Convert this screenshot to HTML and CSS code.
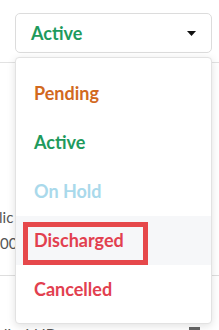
FILE: index.html
```html
<!DOCTYPE html>
<html lang="en">
<head>
    <meta charset="UTF-8">
    <title>Status</title>
    <link rel="stylesheet" href="styles.css">
</head>
<body>
<div class="page">
    <div class="status">
        <div class="select">
            <span class="value active">Active</span>
            <svg class="caret" width="9" height="5" viewBox="0 0 9 5"><path d="M0 0h9L4.5 5z" fill="#111"/></svg>
        </div>
    </div>

    <div class="details">
        <div class="group">
            <p class="label">lic</p>
            <p class="number">00</p>
        </div>
        <div class="group next">
            <p class="label">dicaid ID:</p>
            <span class="box"></span>
        </div>
    </div>

    <ul class="menu">
        <li class="item pending">Pending</li>
        <li class="item active">Active</li>
        <li class="item hold">On Hold</li>
        <li class="item discharged hover">Discharged<span class="mark"></span></li>
        <li class="item cancelled">Cancelled</li>
    </ul>
</div>
</body>
</html>
```

FILE: styles.css
```css
body{
    margin: 0;
    background-color: #ffffff;
    font-family: Lato, "Open Sans", Arial, sans-serif;
}
.page{
    position: relative;
    width: 219px;
    height: 330px;
    overflow: hidden;
}
.status{
    padding: 13px 7px 0 15px;
}
.select{
    display: flex;
    align-items: center;
    justify-content: space-between;
    height: 40px;
    box-sizing: border-box;
    padding: 0 15px;
    border: 1px solid #dcdcdc;
    border-radius: 5px;
}
.value{
    font-size: 18px;
    font-weight: 700;
}
.caret{
    display: block;
}

/* page content under the open menu */
.details{
    margin-top: 9px;
    border-top: 1px solid #e2e2e2;
    padding-top: 141px;
}
.group{
    border-bottom: 1px solid #dedede;
    padding-bottom: 19px;
}
.group.next{
    display: flex;
    justify-content: space-between;
    border-bottom: none;
    padding: 45px 19px 0 0;
}
.label, .number{
    margin: 0;
    font-size: 15px;
    line-height: 26px;
    color: #555555;
}
.label{
    margin-left: -1px;
}
.box{
    width: 11px;
    height: 14px;
    margin-top: 6px;
    background-color: #666666;
}

.menu{
    position: absolute;
    left: 15px;
    top: 57px;
    width: 197px;
    height: 267px;
    box-sizing: border-box;
    margin: 0;
    padding: 11px 0;
    list-style: none;
    background-color: #ffffff;
    border: 1px solid #e2e2e2;
    border-radius: 4px;
    box-shadow: 0 2px 8px rgba(0, 0, 0, 0.12);
}
.item{
    position: relative;
    height: 49px;
    line-height: 49px;
    padding-left: 18px;
    font-size: 18px;
    font-weight: 700;
}
.item.hover{
    background-color: #f6f7f9;
}
.mark{
    position: absolute;
    left: 7px;
    top: 6px;
    width: 125px;
    height: 43px;
    box-sizing: border-box;
    border: 5px solid #e6484b;
}
.pending{ color: #d2691e; }
.active{ color: #1e9a5c; }
.hold{ color: #a9d9eb; }
.discharged, .cancelled{ color: #e2404f; }
```
